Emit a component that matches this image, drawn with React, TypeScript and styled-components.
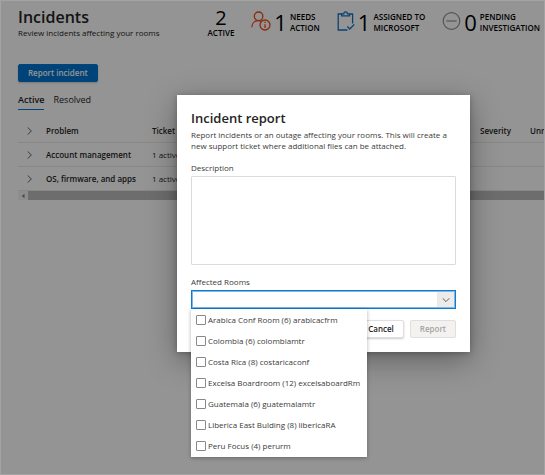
import React, { useState } from "react";
import styled, { createGlobalStyle } from "styled-components";

const GlobalStyle = createGlobalStyle`
  * { box-sizing: border-box; }
  body {
    margin: 0;
    background: #ffffff;
    color: #252423;
    font-family: "Open Sans", "Noto Sans", sans-serif;
    font-size: 8px;
    line-height: 11px;
  }
  button, input, textarea { font: inherit; color: inherit; }
`;

const Frame = styled.div`
  position: relative;
  min-height: 100vh;
  border: 1px solid #a3a3a3;
  overflow: hidden;
`;

const Page = styled.main`
  padding: 7px 0 0 17px;
`;

const Header = styled.header`
  display: flex;
  align-items: flex-start;
  justify-content: space-between;
  height: 56px;
  padding-right: 4px;
`;

const Title = styled.h1`
  margin: 0;
  font-size: 16px;
  line-height: 19px;
  font-weight: 600;
`;

const Subtitle = styled.p`
  margin: 0;
`;

const Stats = styled.div`
  display: flex;
  gap: 17px;
  color: #000000;
`;

const Total = styled.div`
  display: flex;
  flex-direction: column;
  align-items: center;
  line-height: 11px;
  font-weight: 600;
`;

const TotalCount = styled.span`
  font-size: 20px;
  line-height: 19px;
  font-weight: 400;
`;

const StatBox = styled.div`
  display: flex;
  align-items: flex-start;
  gap: 3px;
  padding-top: 3px;
`;

const StatCount = styled.span`
  font-size: 22px;
  line-height: 22px;
  font-weight: 400;
`;

const StatLabel = styled.span`
  white-space: pre-line;
  line-height: 11px;
  font-weight: 600;
`;

const Button = styled.button<{ $kind: "primary" | "default" }>`
  height: 18px;
  padding: 0 9px;
  border: 1px solid ${(p) => (p.$kind === "primary" ? "#0078d4" : "#e1dfdd")};
  border-radius: 2px;
  background: ${(p) => (p.$kind === "primary" ? "#0074d0" : "#ffffff")};
  color: ${(p) => (p.$kind === "primary" ? "#ffffff" : "#252423")};
  font-weight: 600;
  line-height: 16px;
  box-shadow: 0 1px 2px rgba(0, 0, 0, 0.2);

  &:disabled {
    background: #f3f2f1;
    color: #a6a4a2;
    box-shadow: none;
  }
`;

const Tabs = styled.div`
  display: flex;
  gap: 9px;
  margin-top: 12px;
`;

const Tab = styled.button<{ $active: boolean }>`
  height: 16px;
  padding: 0 0 3px;
  border: 0;
  border-bottom: 1px solid ${(p) => (p.$active ? "#0078d4" : "transparent")};
  background: none;
  font-size: 9px;
  line-height: 12px;
  font-weight: ${(p) => (p.$active ? 600 : 400)};
`;

const TableClip = styled.div`
  margin-top: 9px;
  overflow: hidden;
`;

const Table = styled.table`
  width: 580px;
  table-layout: fixed;
  border-collapse: separate;
  border-spacing: 0;
  text-align: left;
`;

const Column = styled.col<{ $width: number }>`
  width: ${(p) => p.$width}px;
`;

const HeadCell = styled.th`
  height: 24px;
  padding: 0;
  border-bottom: 1px solid #edebe9;
  font-weight: 600;
`;

const Cell = styled.td<{ $strong?: boolean }>`
  height: 24px;
  padding: 0;
  border-bottom: 1px solid #edebe9;
  font-weight: ${(p) => (p.$strong ? 600 : 400)};
  white-space: nowrap;
`;

const Expander = styled.button`
  display: flex;
  width: 20px;
  padding: 0 0 0 8px;
  border: 0;
  background: none;
`;

const Scrollbar = styled.div`
  display: flex;
  align-items: center;
  height: 9px;
  background: #f3f3f3;
`;

const ScrollArrow = styled.div`
  display: flex;
  justify-content: center;
  width: 10px;
`;

const ScrollThumb = styled.div`
  flex: 1;
  height: 9px;
  background: #bcbcbc;
`;

const Scrim = styled.div`
  position: absolute;
  inset: 0;
  padding: 94px 74px 0 176px;
  background: rgba(0, 0, 0, 0.42);
`;

const Dialog = styled.section`
  padding: 14px;
  background: #ffffff;
  color: #3b3a39;
  box-shadow: 0 8px 28px rgba(0, 0, 0, 0.35), 0 1px 6px rgba(0, 0, 0, 0.25);
`;

const DialogTitle = styled.h2`
  margin: 0 0 2px;
  color: #252423;
  font-size: 13px;
  line-height: 18px;
  font-weight: 600;
`;

const DialogText = styled.p`
  margin: 0 0 11px;
`;

const FieldLabel = styled.label`
  display: block;
  margin-bottom: 2px;
  line-height: 12px;
`;

const Description = styled.textarea`
  display: block;
  width: 100%;
  height: 89px;
  margin-bottom: 11px;
  padding: 4px;
  border: 1px solid #dddbd9;
  border-radius: 1px;
  outline: 0;
  resize: none;
`;

const Combo = styled.div`
  position: relative;
  display: flex;
  height: 19px;
  border: 1px solid #0f7ad0;
  box-shadow: inset 0 0 0 1px #7db8e6;
`;

const ComboInput = styled.input`
  flex: 1;
  min-width: 0;
  padding: 0 6px;
  border: 0;
  background: none;
  outline: 0;
`;

const ComboToggle = styled.button`
  display: flex;
  align-items: center;
  justify-content: center;
  width: 17px;
  margin: 1px 1px 1px 0;
  padding: 0;
  border: 0;
  background: #edebe9;
`;

const Menu = styled.div`
  position: absolute;
  top: calc(100% + 1px);
  left: -1px;
  z-index: 1;
  width: 176px;
  padding-bottom: 1px;
  background: #ffffff;
  box-shadow: 0 1px 4px rgba(0, 0, 0, 0.3);
`;

const Option = styled.label`
  display: flex;
  align-items: center;
  gap: 2px;
  height: 21px;
  padding-left: 5px;
  white-space: nowrap;
`;

const Tick = styled.input`
  appearance: none;
  width: 10px;
  height: 10px;
  margin: 0;
  border: 1px solid #8a8886;
  border-radius: 1px;

  &:checked {
    background: #0078d4;
  }
`;

const Actions = styled.div`
  display: flex;
  justify-content: flex-end;
  gap: 6px;
  margin-top: 11px;
`;

const Chevron = ({ down = false }: { down?: boolean }) => (
  <svg width="8" height="8" viewBox="0 0 8 8" fill="none" stroke="#3b3a39" strokeWidth="0.8" aria-hidden="true">
    <path d={down ? "M0.7 2.3L4 5.6L7.3 2.3" : "M1.8 0.5L5.3 4L1.8 7.5"} />
  </svg>
);

const PersonInfoIcon = () => (
  <svg width="20" height="20" viewBox="0 0 20 20" fill="none" stroke="#f04a18" strokeWidth="1.3" aria-hidden="true">
    <circle cx="7.6" cy="5.3" r="4.3" />
    <path d="M0.8 16.2C1 12.2 3.7 9.6 7.4 9.6C8.7 9.6 9.6 9.9 10.4 10.4" />
    <circle cx="14" cy="14" r="5" />
    <path d="M14 13.2V17M14 10.8V12" />
  </svg>
);

const ClipboardIcon = () => (
  <svg width="18" height="20" viewBox="0 0 18 20" fill="none" stroke="#1473c0" strokeWidth="1.3" aria-hidden="true">
    <path d="M5 3H1.2V19H10.5M12.5 3H15.6V12.5" />
    <path d="M4.7 4.8V2.8H6.8C6.8 0.2 10.4 0.2 10.4 2.8H12.5V4.8Z" />
    <path d="M10.4 15.5L12.8 18L17.3 13.4" />
  </svg>
);

const MinusIcon = () => (
  <svg width="19" height="20" viewBox="0 0 19 20" fill="none" stroke="#929292" strokeWidth="1.2" aria-hidden="true">
    <circle cx="9.5" cy="10" r="8.3" />
    <path d="M4.4 10H14.6" />
  </svg>
);

const STATS = [
  { icon: <PersonInfoIcon />, count: 1, label: "NEEDS\nACTION" },
  { icon: <ClipboardIcon />, count: 1, label: "ASSIGNED TO\nMICROSOFT" },
  { icon: <MinusIcon />, count: 0, label: "PENDING\nINVESTIGATION" },
];

const PROBLEMS = ["Account management", "OS, firmware, and apps"];

const ROOMS = [
  "Arabica Conf Room (6) arabicacfrm",
  "Colombia (6) colombiamtr",
  "Costa Rica (8) costaricaconf",
  "Excelsa Boardroom (12) excelsaboardRm",
  "Guatemala (6) guatemalamtr",
  "Liberica East Bulding (8) libericaRA",
  "Peru Focus (4) perurm",
];

export default function App() {
  const [tab, setTab] = useState("Active");

  return (
    <Frame>
      <GlobalStyle />
      <Page>
        <Header>
          <div>
            <Title>Incidents</Title>
            <Subtitle>Review incidents affecting your rooms</Subtitle>
          </div>
          <Stats>
            <Total>
              <TotalCount>2</TotalCount>
              ACTIVE
            </Total>
            {STATS.map((s) => (
              <StatBox key={s.label}>
                {s.icon}
                <StatCount>{s.count}</StatCount>
                <StatLabel>{s.label}</StatLabel>
              </StatBox>
            ))}
          </Stats>
        </Header>
        <Button $kind="primary">Report incident</Button>
        <Tabs role="tablist">
          {["Active", "Resolved"].map((name) => (
            <Tab key={name} role="tab" aria-selected={tab === name} $active={tab === name} onClick={() => setTab(name)}>
              {name}
            </Tab>
          ))}
        </Tabs>
        <TableClip>
          <Table>
            <colgroup>
              <Column $width={28} />
              <Column $width={106} />
              <Column $width={328} />
              <Column $width={50} />
              <Column $width={68} />
            </colgroup>
            <thead>
              <tr>
                <HeadCell>
                  <Expander aria-label="Expand all"><Chevron /></Expander>
                </HeadCell>
                <HeadCell>Problem</HeadCell>
                <HeadCell>Ticket</HeadCell>
                <HeadCell>Severity</HeadCell>
                <HeadCell>Unresolved</HeadCell>
              </tr>
            </thead>
            <tbody>
              {PROBLEMS.map((problem) => (
                <tr key={problem}>
                  <Cell>
                    <Expander aria-label={`Expand ${problem}`}><Chevron /></Expander>
                  </Cell>
                  <Cell $strong>{problem}</Cell>
                  <Cell>1 active</Cell>
                  <Cell />
                  <Cell />
                </tr>
              ))}
            </tbody>
          </Table>
          <Scrollbar>
            <ScrollArrow>
              <svg width="4" height="6" viewBox="0 0 4 6" aria-hidden="true">
                <path d="M3.5 0.8V5.2L0.8 3Z" fill="#7a7a7a" />
              </svg>
            </ScrollArrow>
            <ScrollThumb />
          </Scrollbar>
        </TableClip>
      </Page>
      <Scrim>
        <Dialog role="dialog" aria-modal="true" aria-labelledby="report-title">
          <DialogTitle id="report-title">Incident report</DialogTitle>
          <DialogText>
            Report incidents or an outage affecting your rooms. This will create a new support ticket where additional
            files can be attached.
          </DialogText>
          <FieldLabel htmlFor="description">Description</FieldLabel>
          <Description id="description" />
          <FieldLabel htmlFor="rooms">Affected Rooms</FieldLabel>
          <Combo>
            <ComboInput id="rooms" role="combobox" aria-expanded="true" aria-controls="room-list" />
            <ComboToggle aria-label="Show rooms"><Chevron down /></ComboToggle>
            <Menu id="room-list">
              {ROOMS.map((room) => (
                <Option key={room}>
                  <Tick type="checkbox" />
                  {room}
                </Option>
              ))}
            </Menu>
          </Combo>
          <Actions>
            <Button $kind="default">Cancel</Button>
            <Button $kind="default" disabled>Report</Button>
          </Actions>
        </Dialog>
      </Scrim>
    </Frame>
  );
}
